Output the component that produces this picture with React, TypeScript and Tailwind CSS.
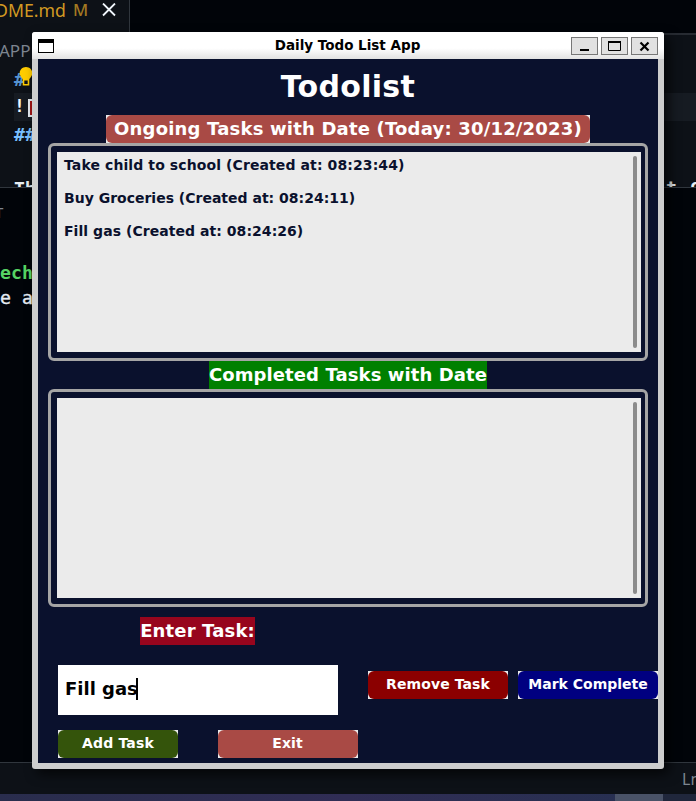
import React from "react";

function Chip({ className, children }: { className: string; children: React.ReactNode }) {
  return (
    <div className="h-[28px] shrink-0 bg-[#ebebeb]">
      <div className={"flex h-[28px] items-center justify-center rounded-[6px] pb-[2px] font-bold text-white " + className}>
        {children}
      </div>
    </div>
  );
}

interface Task {
  text: string;
  tracking: string;
}

const ongoing: Task[] = [
  { text: "Take child to school (Created at: 08:23:44)", tracking: "tracking-[0.1px]" },
  { text: "Buy Groceries (Created at: 08:24:11)", tracking: "tracking-[0px]" },
  { text: "Fill gas (Created at: 08:24:26)", tracking: "tracking-[0.05px]" },
];

function TaskFrame({ tasks }: { tasks: Task[] }) {
  return (
    <div className="mx-[10px] h-[218px] shrink-0 rounded-[6px] border-[3px] border-[#a5a5a5] pt-[6px] pr-[4px] pb-[6px] pl-[6px]">
      <div className="flex h-[200px] justify-between bg-[#ebebeb] py-[4px] pr-[4px] pl-[7px]">
        <div className="text-[14px] leading-[16px] font-bold text-[#0a112d]">
          {tasks.map((t) => (
            <div key={t.text} className={"h-[33px] pt-[1px] " + t.tracking}>{t.text}</div>
          ))}
        </div>
        <div className="h-[192px] w-[4px] rounded-full bg-[#8b8b8b]" />
      </div>
    </div>
  );
}

function WindowButton({ children }: { children: React.ReactNode }) {
  return (
    <button className="flex h-[18px] w-[27px] items-center justify-center border border-[#777] bg-[#e1e1e1]">
      <svg width="25" height="16" viewBox="0 0 25 16" fill="none" stroke="#000">{children}</svg>
    </button>
  );
}

function Backdrop() {
  return (
    <div className="flex h-[801px] w-[696px] flex-col overflow-hidden bg-[#010409] font-['Noto_Sans','Open_Sans',sans-serif] whitespace-nowrap">
      <div className="flex h-[35px] shrink-0">
        <div className="flex w-[130px] border-r border-[#30363d] bg-[#0d1117]">
          <div className="-ml-[5px] text-[17.7px] leading-[20px] text-[#d29922]">DME.md</div>
          <div className="ml-[7px] text-[16.5px] leading-[20px] font-medium text-[#a47922]">M</div>
          <svg className="mt-[3px] ml-[14px]" width="14" height="14" viewBox="0 0 14 14" stroke="#f0f6fc" strokeWidth="1.8"><path d="M1 0.5l12 12M13 0.5L1 12.5" /></svg>
        </div>
        <div className="flex-1 border-b-2 border-[#272b32]" />
      </div>
      <div className="h-[152px] shrink-0 overflow-hidden bg-[#0d1117]">
        <div className="-ml-[1px] h-[34px] pt-[5px] text-[17px] leading-[22px] text-[#7d8590]">APP</div>
        <div className="ml-[14px] flex h-[24px] font-['DejaVu_Sans_Mono',monospace] text-[18.2px] leading-[22px] font-bold text-[#5593d0]">
          <span>#</span>
          <svg className="-mt-[3px] -ml-[6px]" width="14" height="22" viewBox="0 0 14 22"><path d="M7 1C3.3 1 .7 3.8.7 7c0 3 2 4.600 3 6v6.500h6.600V13c1-1.400 3-3 3-6C13.300 3.800 10.700 1 7 1z" fill="#fc0" /><path d="M5.300 14.500h3.400v3.500H5.300z" fill="#0d1117" /></svg>
        </div>
        <div className="ml-[14px] flex h-[28px] bg-[#161b22] pt-[3px] font-['DejaVu_Sans_Mono',monospace] text-[18.2px] leading-[20px] font-bold text-[#f0f6fc]">
          <span className="w-[14px]">!</span>
          <span className="mt-[3px] h-[18px] w-[10px] border-2 border-[#e6edf3] bg-[#a31515]" />
        </div>
        <div className="ml-[14px] h-[54px] pt-[4px] font-['DejaVu_Sans_Mono',monospace] text-[18.2px] leading-[20px] font-bold text-[#79c0ff]">##</div>
        <div className="ml-[14px] flex w-[690px] font-['DejaVu_Sans_Mono',monospace] text-[18px] leading-[20px] font-bold text-[#e6edf3]">
          <span className="mt-[4px] w-[648px]">Th</span>
          <span className="mt-[3px] pl-[4px]">t</span>
          <span className="mt-[1px] pl-[13px]">c</span>
        </div>
      </div>
      <div className="h-[576px] shrink-0 border-t border-b border-[#30363d] font-['DejaVu_Sans_Mono',monospace] text-[18.2px] text-[#e6edf3]">
        <div className="-ml-[5px] h-[72px] pt-[14px] font-['Noto_Sans',sans-serif] text-[15px] leading-[20px] text-[#7d8590]">T</div>
        <div className="h-[25px] leading-[25px] font-bold text-[#56d364]">ech</div>
        <div className="h-[25px] leading-[25px] [-webkit-text-stroke:0.4px]">e a</div>
      </div>
      <div className="h-[31px] shrink-0 bg-[#0d1117] pl-[682px] text-[16px] leading-[33px] text-[#7d8590]">Ln</div>
      <div className="flex h-[7px] shrink-0 bg-linear-to-r from-[#292d4d] via-[#302d55] to-[#253050]">
        <div className="ml-[615px] w-[48px] bg-[#495267]" />
        <div className="flex-1 bg-[#20273c]" />
      </div>
    </div>
  );
}

function TodoWindow() {
  return (
    <div className="absolute top-[32px] left-[32px] flex h-[737px] w-[632px] flex-col overflow-hidden rounded-[3px] bg-[#cdcdcd] font-['DejaVu_Sans',sans-serif] whitespace-nowrap shadow-[5px_5px_12px_#000a]">
      <div className="flex h-[27px] shrink-0 items-center bg-linear-to-b from-white from-60% to-[#e2e2e2] px-[6px]">
        <div className="h-[14px] w-[16px] border border-t-4 border-black bg-white" />
        <div className="flex-1 pl-[70px] text-center text-[13.5px] font-bold text-black">
          Daily Todo List App
        </div>
        <div className="mt-[1px] flex gap-[3px]">
          <WindowButton><path d="M8 12h9" strokeWidth="2" /></WindowButton>
          <WindowButton><path d="M6.5 4h12v8.500h-12z" strokeWidth="1" /><path d="M6 4h13" strokeWidth="2" /></WindowButton>
          <WindowButton><path d="M8.5 4.5l8 8M16.5 4.5l-8 8" strokeWidth="2.2" /></WindowButton>
        </div>
      </div>
      <div className="mx-[6px] flex h-[704px] shrink-0 flex-col bg-[#0a112d]">
        <h1 className="h-[56px] shrink-0 text-center text-[30px] leading-[56px] font-bold tracking-[0.3px] text-white">Todolist</h1>
        <div className="flex justify-center">
          <Chip className="w-[484px] bg-[#a94a45] text-[18px] tracking-[0.19px]">Ongoing Tasks with Date (Today: 30/12/2023)</Chip>
        </div>
        <TaskFrame tasks={ongoing} />
        <div className="mx-auto flex h-[28px] w-[278px] shrink-0 items-center justify-center bg-[#008000] pb-[2px] text-[18px] font-bold tracking-[0.1px] text-white">
          Completed Tasks with Date
        </div>
        <TaskFrame tasks={[]} />
        <div className="mt-[10px] ml-[102px] flex h-[28px] w-[115px] shrink-0 items-center justify-center bg-[#97051d] pb-[2px] text-[18px] font-bold tracking-[0.15px] text-white">
          Enter Task:
        </div>
        <div className="mt-[20px] flex shrink-0 pl-[20px]">
          <div className="flex h-[50px] w-[280px] items-center bg-white pb-[2px] pl-[7px] text-[18px] font-bold text-black">
            <span className="-mt-[2px]">Fill gas</span>
            <span className="-ml-[2px] h-[22px] w-[2px] bg-black" />
          </div>
          <div className="mt-[6px] ml-[30px] flex gap-[10px]">
            <Chip className="w-[140px] bg-[#8b0000] text-[14px] tracking-[0.1px]">Remove Task</Chip>
            <Chip className="w-[140px] bg-[#000080] text-[14px]">Mark Complete</Chip>
          </div>
        </div>
        <div className="mt-[15px] flex gap-[40px] pl-[20px]">
          <Chip className="w-[120px] bg-[#34540b] text-[14px] tracking-[0.15px]">Add Task</Chip>
          <Chip className="w-[140px] bg-[#a94a45] pr-[1px] text-[14px] tracking-[0.1px]">Exit</Chip>
        </div>
      </div>
    </div>
  );
}

export default function App() {
  return (
    <div className="relative h-[801px] w-[696px] overflow-hidden">
      <Backdrop />
      <TodoWindow />
    </div>
  );
}
